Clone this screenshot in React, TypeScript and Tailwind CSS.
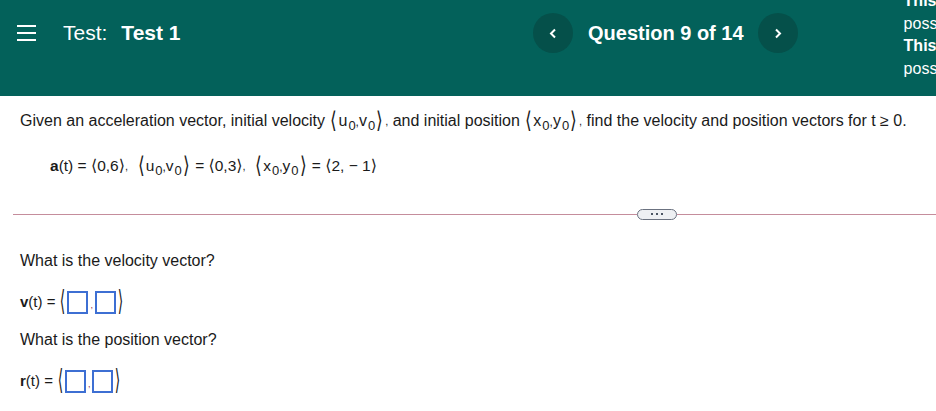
import type { ReactNode } from "react";

// angle-bracket vector, big = stretchy brackets around subscripted parts
function Vec({ children, big = false }: { children: ReactNode; big?: boolean }) {
  if (big) {
    return (
      <span className="inline-flex items-center align-middle">
        <span className="inline-block font-['DejaVu_Sans',sans-serif] text-[23px] leading-none scale-x-[0.75] -translate-y-[1px]">⟨</span>
        <span>{children}</span>
        <span className="inline-block font-['DejaVu_Sans',sans-serif] text-[23px] leading-none scale-x-[0.75] -translate-y-[1px]">⟩</span>
      </span>
    );
  }
  return (
    <span>
      <span className="font-['DejaVu_Sans',sans-serif] text-[16px]">⟨</span>
      {children}
      <span className="font-['DejaVu_Sans',sans-serif] text-[16px]">⟩</span>
    </span>
  );
}

function Sub({ children }: { children: ReactNode }) {
  return <span className="relative top-[4px] text-[13px] ml-[1px]">{children}</span>;
}

function Chevron({ dir }: { dir: "left" | "right" }) {
  return (
    <svg width="8" height="11" viewBox="0 0 8 11" fill="none">
      <polyline
        points={dir === "left" ? "6,1.5 2,5.5 6,9.5" : "2,1.5 6,5.5 2,9.5"}
        stroke="white"
        strokeWidth="2"
      />
    </svg>
  );
}

function AnswerRow({ label }: { label: string }) {
  return (
    <div className="flex items-center h-[30px] mt-[11px]">
      <span className="text-[15px]">
        <b>{label}</b>(t) =
      </span>
      <span className="ml-[2px] -mr-[1px] inline-block font-['DejaVu_Sans',sans-serif] text-[28px] leading-none scale-x-[0.5] -translate-y-[1px]">⟨</span>
      <span className="w-[21px] h-[23px] border-2 border-[#3d6fd3] bg-white" />
      <span className="text-[9px] text-[#8a2a4a] self-end mb-[5px] mx-[2px]">,</span>
      <span className="w-[21px] h-[23px] border-2 border-[#3d6fd3] bg-white" />
      <span className="-ml-[1px] inline-block font-['DejaVu_Sans',sans-serif] text-[28px] leading-none scale-x-[0.5] -translate-y-[1px]">⟩</span>
    </div>
  );
}

export default function App() {
  return (
    <div className="w-[936px] h-[411px] overflow-hidden bg-white font-['Liberation_Sans',Arial,sans-serif] text-[#1a1a1a]">
      {/* top bar */}
      <header className="h-[96px] bg-[#03615a] text-white flex items-start overflow-hidden">
        <div className="w-[533px] shrink-0 flex items-center h-[66px] pl-[17px]">
          <div className="flex flex-col gap-[5px] w-[19px]">
            <span className="h-[2px] bg-white" />
            <span className="h-[2px] bg-white" />
            <span className="h-[2px] bg-white" />
          </div>
          <span className="ml-[27px] text-[21px]">Test:</span>
          <span className="ml-[14px] text-[21px] font-bold">Test 1</span>
        </div>
        <div className="shrink-0 flex items-center h-[66px]">
          <button className="w-[40px] h-[40px] rounded-full bg-[#05504a] flex items-center justify-center">
            <Chevron dir="left" />
          </button>
          <span className="ml-[15px] mr-[14px] text-[20px] font-bold">Question 9 of 14</span>
          <button className="w-[40px] h-[40px] rounded-full bg-[#05504a] flex items-center justify-center">
            <Chevron dir="right" />
          </button>
        </div>
        <div className="ml-[106px] w-[220px] shrink-0 -mt-[10px] text-[16px] leading-[22.5px]">
          <div className="font-bold">This question is</div>
          <div>possible points.</div>
          <div className="font-bold">This question will</div>
          <div>possibly be graded.</div>
        </div>
      </header>

      {/* question */}
      <div className="text-[16px]">
        <div className="h-[30px] mt-[10px] pl-[20px] flex items-center whitespace-nowrap">
          <span>Given an acceleration vector, initial velocity&nbsp;</span>
          <Vec big>
            u<Sub>0</Sub>
            <span className="text-[12px]">,</span>v<Sub>0</Sub>
          </Vec>
          <span className="text-[11px] ml-[1px]">,</span>
          <span>&nbsp;and initial position&nbsp;</span>
          <Vec big>
            x<Sub>0</Sub>
            <span className="text-[12px]">,</span>y<Sub>0</Sub>
          </Vec>
          <span className="text-[11px] ml-[1px]">,</span>
          <span>&nbsp;find the velocity and position vectors for t ≥ 0.</span>
        </div>

        <div className="h-[30px] mt-[15px] pl-[50px] flex items-center whitespace-nowrap text-[15.5px]">
          <b>a</b>(t) =&nbsp;
          <Vec>0,6</Vec>
          <span className="text-[11px]">,</span>&nbsp;&nbsp;
          <Vec big>
            u<Sub>0</Sub>
            <span className="text-[12px]">,</span>v<Sub>0</Sub>
          </Vec>
          &nbsp;=&nbsp;
          <Vec>0,3</Vec>
          <span className="text-[11px]">,</span>&nbsp;&nbsp;
          <Vec big>
            x<Sub>0</Sub>
            <span className="text-[12px]">,</span>y<Sub>0</Sub>
          </Vec>
          &nbsp;=&nbsp;
          <Vec>2, − 1</Vec>
        </div>

        {/* divider with expand pill */}
        <div className="mt-[27px] ml-[13px] h-[12px] flex items-center">
          <div className="w-[624px] h-px bg-[#c58d9c]" />
          <div className="w-[40px] h-[11px] rounded-full border border-[#6b7280] bg-[#eef0f3] flex items-center justify-center gap-[3px]">
            <span className="w-[2px] h-[2px] bg-[#4b5563]" />
            <span className="w-[2px] h-[2px] bg-[#4b5563]" />
            <span className="w-[2px] h-[2px] bg-[#4b5563]" />
          </div>
          <div className="flex-1 h-px bg-[#c58d9c]" />
        </div>

        <div className="pl-[20px]">
          <div className="h-[30px] mt-[26px] flex items-center">What is the velocity vector?</div>
          <AnswerRow label="v" />
          <div className="h-[30px] mt-[8px] flex items-center">What is the position vector?</div>
          <div className="mt-[1px]">
            <AnswerRow label="r" />
          </div>
        </div>
      </div>
    </div>
  );
}
